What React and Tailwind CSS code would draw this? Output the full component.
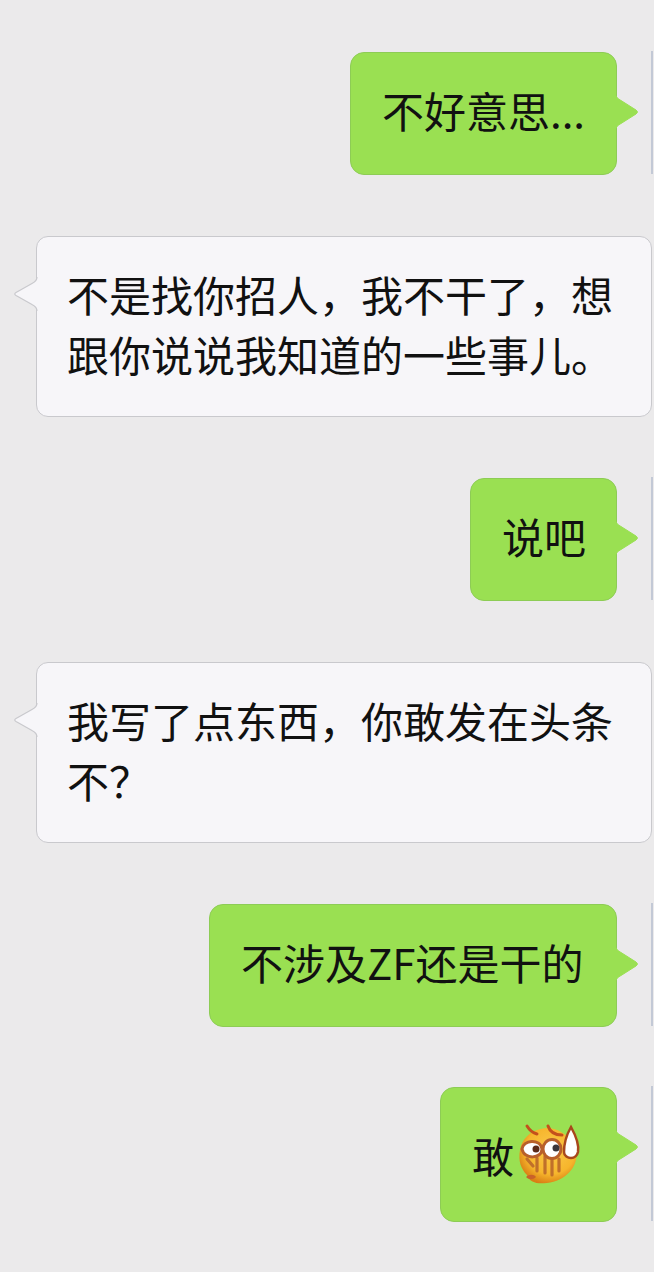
const Tail = ({ side, color, stroke }) => (
  <svg
    width="28"
    height="52"
    viewBox="0 0 28 52"
    className={side === "right" ? "absolute top-[33px] left-full -ml-[3px]" : "absolute top-[31px] right-full -mr-[3px]"}
  >
    {side === "right" ? (
      <path d="M2 8 C3 11 5 13 8 14.5 L23 24 Q26 26 23 28 L8 37.5 C5 39 3 41 2 44 Z" fill={color} stroke={stroke} strokeWidth="1" />
    ) : (
      <>
        <path d="M26 9 C25 12 23 14 20 15.5 L4 24.5 Q1.5 26 4 27.5 L20 36.5 C23 38 25 40 26 43 Z" fill={color} />
        <path d="M25 9 C25 12 23 14 20 15.5 L4 24.5 Q1.5 26 4 27.5 L20 36.5 C23 38 25 40 25 43" fill="none" stroke={stroke} strokeWidth="1.2" />
      </>
    )}
  </svg>
);

const Right = ({ w, children, h = "h-[123px]", pb = "pb-[8px]" }) => (
  <div className={`relative self-end mr-[37px] ${h} ${w} ${pb} rounded-[14px] bg-[#9ae052] border border-[#8dcc55] flex items-center pl-[31px] text-[#111] whitespace-nowrap`}>
    {children}
    <Tail side="right" color="#9ae052" stroke="#9ae052" />
    <div className="absolute top-[-2px] bottom-0 left-full ml-[35px] w-[2px] bg-[#c3c9d6]" />
  </div>
);

const Left = ({ lines }) => (
  <div className="relative self-end mr-[2px] w-[616px] h-[181px] pb-[6px] rounded-[12px] bg-[#f7f6f9] border border-[#c9c9cd] flex flex-col justify-center pl-[30px] text-[#111] leading-[60px]">
    {lines.map((l) => (
      <div key={l} className="whitespace-nowrap">{l}</div>
    ))}
    <Tail side="left" color="#f7f6f9" stroke="#c9c9cd" />
  </div>
);

const Emoji = () => (
  <svg width="64" height="64" viewBox="0 0 64 64" className="ml-[3px] shrink-0">
    <defs>
      <radialGradient id="face" cx="0.55" cy="0.4" r="0.62">
        <stop offset="0" stopColor="#fbc94a" />
        <stop offset="0.7" stopColor="#f6b52c" />
        <stop offset="1" stopColor="#d97f14" />
      </radialGradient>
    </defs>
    <path d="M24 6 C38 2 54 12 59 28 C62 44 48 58 30 60 C20 61 13 60 10 52 C4 46 1 38 3 27 C5 16 13 8 24 6 Z" fill="url(#face)" />
    <path d="M10 3 C13 8 16 10 20 11" stroke="#c4501c" strokeWidth="3" fill="none" strokeLinecap="round" />
    <path d="M31 3 C33 9 38 12 45 12" stroke="#c4501c" strokeWidth="3" fill="none" strokeLinecap="round" />
    <path d="M10 36 L16 43 M20 35 L20 48 M28 33 L28 50 M35 36 L35 52 M42 36 L42 48" stroke="#c0702a" strokeWidth="3.2" fill="none" strokeLinecap="round" />
    <path d="M5 26 C6 17 23 15 25 26 C25 36 7 37 5 26 Z" fill="#fff" stroke="#b8602a" strokeWidth="3" />
    <circle cx="19" cy="26" r="3.5" fill="#5b2a18" />
    <ellipse cx="35" cy="26" rx="9" ry="9.5" fill="#fff" stroke="#b8602a" strokeWidth="3" />
    <circle cx="39" cy="25" r="3.5" fill="#39353a" />
    <path d="M9 54 C12 51 17 51 19 54 C16 57 12 57 9 54 Z" fill="#c9622a" />
    <path d="M54 4 C59 13 62 23 61 29 C60 33 57 35 54 35 C51 35 47 33 47 29 C47 21 50 11 54 4 Z" fill="#fff" stroke="#a8481c" strokeWidth="2.5" />
  </svg>
);

export default function App() {
  return (
    <div
      className="relative flex flex-col w-[654px] h-[1272px] pt-[52px] bg-[#ebeaeb] text-[42px] overflow-hidden"
      style={{ fontFamily: '"Noto Sans CJK SC", sans-serif' }}
    >
      <Right w="w-[267px]">不好意思...</Right>
      <div className="h-[61px]" />
      <Left lines={["不是找你招人，我不干了，想", "跟你说说我知道的一些事儿。"]} />
      <div className="h-[61px]" />
      <Right w="w-[147px]">说吧</Right>
      <div className="h-[61px]" />
      <Left lines={["我写了点东西，你敢发在头条", "不？"]} />
      <div className="h-[61px]" />
      <Right w="w-[408px]">不涉及ZF还是干的</Right>
      <div className="h-[60px]" />
      <Right w="w-[177px]" h="h-[135px]" pb="pb-0">敢<Emoji /></Right>
    </div>
  );
}
